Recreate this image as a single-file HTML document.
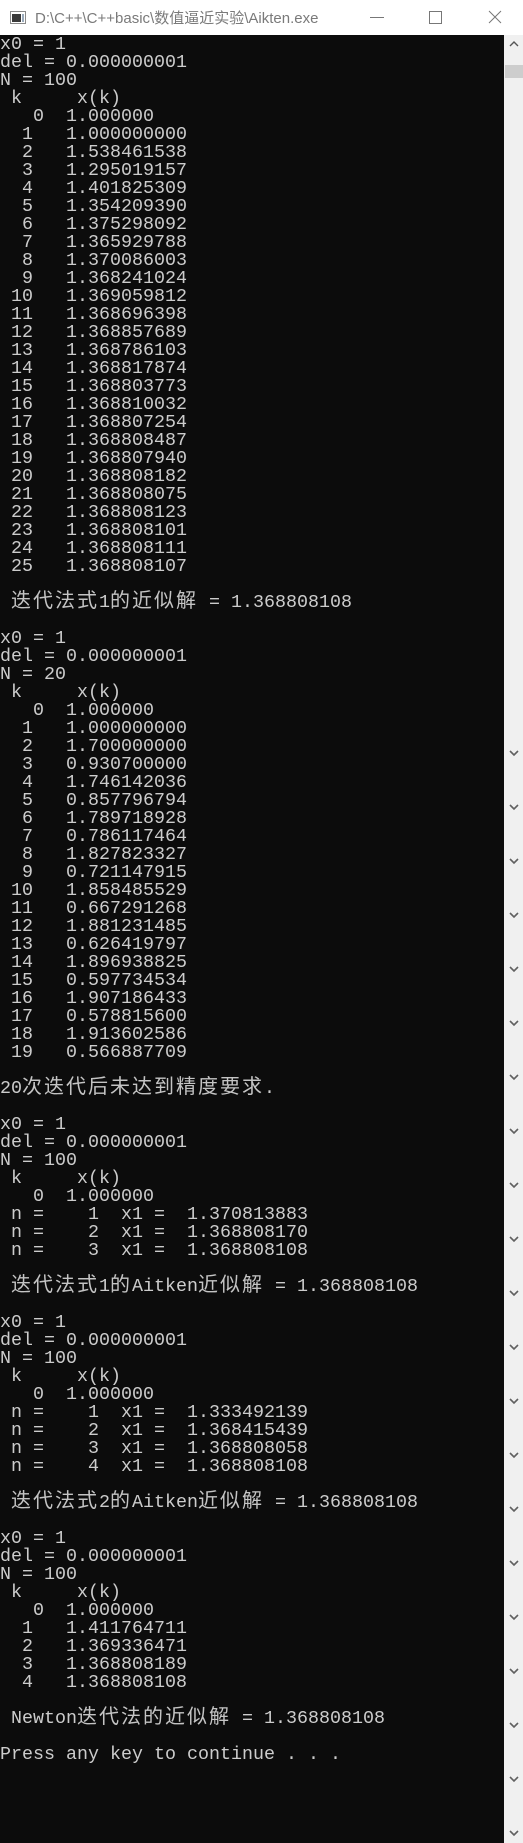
<!DOCTYPE html>
<html><head><meta charset="utf-8">
<style>
html,body{margin:0;padding:0;}
body{width:523px;height:1843px;background:#0c0c0c;position:relative;overflow:hidden;}
#title{position:absolute;left:0;top:0;width:523px;height:35px;background:#fff;}
#title .t{position:absolute;left:35px;top:7px;font:15px "Liberation Sans","Noto Sans CJK SC",sans-serif;color:#7a7a7a;white-space:pre;}
#ico{position:absolute;left:10px;top:11px;width:16px;height:13px;border:1px solid #8a8a8a;box-sizing:border-box;background:#fff;}
#ico:before{content:"";position:absolute;left:1px;top:2px;width:9px;height:8px;background:#3a3a3a;}
#ico:after{content:"";position:absolute;left:11px;top:2px;width:2px;height:8px;background:#9ab;}
#con{position:absolute;left:0;top:36px;width:504px;font-family:"Liberation Mono",monospace;font-size:18.33px;color:#cccccc;}
#con div{height:18px;line-height:18px;white-space:pre;overflow:visible;}
.c{letter-spacing:2px;font-size:20px;font-family:"Noto Sans CJK SC",sans-serif;color:#c4c4c4;line-height:0;}
#sb{position:absolute;left:504px;top:35px;width:19px;height:1808px;background:#f0f0f0;}
#thumb{position:absolute;left:505px;top:65px;width:18px;height:13px;background:#cdcdcd;}
</style></head><body>
<div id="title"><div id="ico"></div><div class="t">D:\C++\C++basic\数值逼近实验\Aikten.exe</div>
<svg style="position:absolute;left:0;top:0" width="523" height="35">
<line x1="370" y1="17.5" x2="384" y2="17.5" stroke="#777" stroke-width="1"/>
<rect x="429.5" y="11.5" width="12" height="12" fill="none" stroke="#777"/>
<path d="M489 11 L501 23 M501 11 L489 23" stroke="#777" stroke-width="1" fill="none"/>
</svg></div>
<div id="sb"></div>
<svg style="position:absolute;left:509px;top:41px" width="10" height="7"><path d="M1 5 L5 1 L9 5" stroke="#555" stroke-width="1.4" fill="none"/></svg>
<div id="thumb"></div>
<svg style="position:absolute;left:0;top:0" width="523" height="1843">
<g stroke="#606060" stroke-width="1.6" fill="none">
<path d="M510 751 L514 755 L518 751"/><path d="M510 805 L514 809 L518 805"/><path d="M510 859 L514 863 L518 859"/><path d="M510 913 L514 917 L518 913"/><path d="M510 967 L514 971 L518 967"/><path d="M510 1021 L514 1025 L518 1021"/><path d="M510 1075 L514 1079 L518 1075"/><path d="M510 1129 L514 1133 L518 1129"/><path d="M510 1183 L514 1187 L518 1183"/><path d="M510 1237 L514 1241 L518 1237"/><path d="M510 1291 L514 1295 L518 1291"/><path d="M510 1345 L514 1349 L518 1345"/><path d="M510 1399 L514 1403 L518 1399"/><path d="M510 1453 L514 1457 L518 1453"/><path d="M510 1507 L514 1511 L518 1507"/><path d="M510 1561 L514 1565 L518 1561"/><path d="M510 1615 L514 1619 L518 1615"/><path d="M510 1669 L514 1673 L518 1669"/><path d="M510 1723 L514 1727 L518 1723"/><path d="M510 1777 L514 1781 L518 1777"/><path d="M510 1831 L514 1835 L518 1831"/>
</g></svg>
<div id="con">
<div>x0 = 1</div>
<div>del = 0.000000001</div>
<div>N = 100</div>
<div> k     x(k)</div>
<div>   0  1.000000</div>
<div>  1   1.000000000</div>
<div>  2   1.538461538</div>
<div>  3   1.295019157</div>
<div>  4   1.401825309</div>
<div>  5   1.354209390</div>
<div>  6   1.375298092</div>
<div>  7   1.365929788</div>
<div>  8   1.370086003</div>
<div>  9   1.368241024</div>
<div> 10   1.369059812</div>
<div> 11   1.368696398</div>
<div> 12   1.368857689</div>
<div> 13   1.368786103</div>
<div> 14   1.368817874</div>
<div> 15   1.368803773</div>
<div> 16   1.368810032</div>
<div> 17   1.368807254</div>
<div> 18   1.368808487</div>
<div> 19   1.368807940</div>
<div> 20   1.368808182</div>
<div> 21   1.368808075</div>
<div> 22   1.368808123</div>
<div> 23   1.368808101</div>
<div> 24   1.368808111</div>
<div> 25   1.368808107</div>
<div></div>
<div> <span class="c">迭代法式</span>1<span class="c">的近似解</span> = 1.368808108</div>
<div></div>
<div>x0 = 1</div>
<div>del = 0.000000001</div>
<div>N = 20</div>
<div> k     x(k)</div>
<div>   0  1.000000</div>
<div>  1   1.000000000</div>
<div>  2   1.700000000</div>
<div>  3   0.930700000</div>
<div>  4   1.746142036</div>
<div>  5   0.857796794</div>
<div>  6   1.789718928</div>
<div>  7   0.786117464</div>
<div>  8   1.827823327</div>
<div>  9   0.721147915</div>
<div> 10   1.858485529</div>
<div> 11   0.667291268</div>
<div> 12   1.881231485</div>
<div> 13   0.626419797</div>
<div> 14   1.896938825</div>
<div> 15   0.597734534</div>
<div> 16   1.907186433</div>
<div> 17   0.578815600</div>
<div> 18   1.913602586</div>
<div> 19   0.566887709</div>
<div></div>
<div>20<span class="c">次迭代后未达到精度要求</span>.</div>
<div></div>
<div>x0 = 1</div>
<div>del = 0.000000001</div>
<div>N = 100</div>
<div> k     x(k)</div>
<div>   0  1.000000</div>
<div> n =    1  x1 =  1.370813883</div>
<div> n =    2  x1 =  1.368808170</div>
<div> n =    3  x1 =  1.368808108</div>
<div></div>
<div> <span class="c">迭代法式</span>1<span class="c">的</span>Aitken<span class="c">近似解</span> = 1.368808108</div>
<div></div>
<div>x0 = 1</div>
<div>del = 0.000000001</div>
<div>N = 100</div>
<div> k     x(k)</div>
<div>   0  1.000000</div>
<div> n =    1  x1 =  1.333492139</div>
<div> n =    2  x1 =  1.368415439</div>
<div> n =    3  x1 =  1.368808058</div>
<div> n =    4  x1 =  1.368808108</div>
<div></div>
<div> <span class="c">迭代法式</span>2<span class="c">的</span>Aitken<span class="c">近似解</span> = 1.368808108</div>
<div></div>
<div>x0 = 1</div>
<div>del = 0.000000001</div>
<div>N = 100</div>
<div> k     x(k)</div>
<div>   0  1.000000</div>
<div>  1   1.411764711</div>
<div>  2   1.369336471</div>
<div>  3   1.368808189</div>
<div>  4   1.368808108</div>
<div></div>
<div> Newton<span class="c">迭代法的近似解</span> = 1.368808108</div>
<div></div>
<div>Press any key to continue . . .</div>
</div>
</body></html>
